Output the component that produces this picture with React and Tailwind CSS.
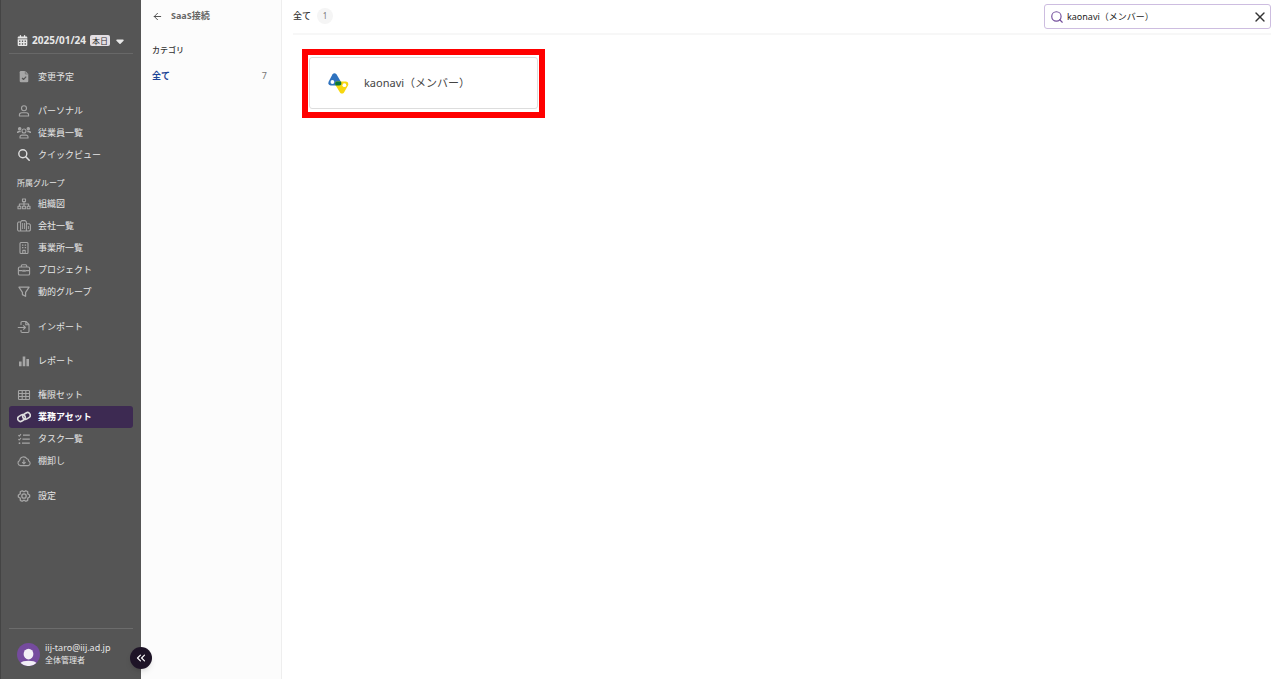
import { useState } from 'react';
import { FaCalendarDays, FaCaretDown } from 'react-icons/fa6';
import { PiGearSixBold } from 'react-icons/pi';
import { LuSearch, LuArrowLeft, LuX, LuChevronsLeft } from 'react-icons/lu';

function Glyph({ className, children }) {
  return (
    <svg
      viewBox="0 0 14 14"
      className={className}
      fill="none"
      stroke="currentColor"
      strokeWidth="1.1"
      strokeLinejoin="round"
      aria-hidden="true"
    >
      {children}
    </svg>
  );
}

const FileCheck = (props) => (
  <Glyph {...props}>
    <path d="M4 1h4.3l3 3v7a1.3 1.3 0 0 1-1.3 1.3H4A1.3 1.3 0 0 1 2.7 11V2.3A1.3 1.3 0 0 1 4 1Z" fill="currentColor" stroke="none" />
    <path d="M8.3 1v3h3" stroke="#6a6a6a" strokeWidth="0.7" />
    <path d="M5 8l1.5 1.5 2.7-2.8" stroke="#555" />
  </Glyph>
);

const Person = (props) => (
  <Glyph {...props}>
    <circle cx="7" cy="4.2" r="2.5" />
    <path d="M2.4 12v-.9c0-1.3 1-2.3 2.3-2.3h4.6c1.3 0 2.3 1 2.3 2.3v.9Z" />
  </Glyph>
);

const People = (props) => (
  <Glyph {...props}>
    <circle cx="2.7" cy="2.8" r="1.2" fill="currentColor" />
    <circle cx="11.3" cy="2.8" r="1.2" fill="currentColor" />
    <circle cx="7" cy="5" r="2" />
    <path d="M.6 7c0-1.1.7-1.6 1.7-1.6h1.4M13.4 7c0-1.1-.7-1.6-1.7-1.6h-1.4" strokeWidth="1.5" />
    <path d="M3 12v-.9c0-1.2.9-2 2-2h4c1.1 0 2 .8 2 2v.9Z" />
  </Glyph>
);

const Magnifier = (props) => (
  <Glyph {...props}>
    <circle cx="5.8" cy="5.8" r="4" strokeWidth="1.4" />
    <path d="M8.8 8.8l3.4 3.4" strokeWidth="1.6" strokeLinecap="round" />
  </Glyph>
);

const OrgChart = (props) => (
  <Glyph {...props}>
    <path d="M5.5 2h3v2.6h-3ZM1 9.2h2.8v2.5H1ZM5.6 9.2h2.8v2.5H5.6ZM10.2 9.2H13v2.5h-2.8Z" />
    <path d="M7 4.6v4.6M2.4 9.2V7h9.2v2.2" />
  </Glyph>
);

const Company = (props) => (
  <Glyph {...props}>
    <path d="M3.6 12V2.8L4.8 1.6h3.4l1.2 1.2V12ZM3.6 3H1.4L.6 4v7l.8 1h2.2M9.4 4.8h3l1 1V11l-1 1h-3" />
    <path d="M5.6 4v6M7.5 4v6M11.4 7v3" strokeWidth="0.9" />
  </Glyph>
);

const Office = (props) => (
  <Glyph {...props}>
    <rect x="3" y="1.5" width="8" height="11" rx="1" />
    <path d="M5 4.1h1.4M7.7 4.1h1.4M5 6.6h1.4M7.7 6.6h1.4" strokeWidth="1.4" />
    <path d="M5.8 12.3V9.4h2.4v2.9" />
  </Glyph>
);

const Briefcase = (props) => (
  <Glyph {...props}>
    <rect x="1.4" y="4" width="11.2" height="8" rx="1.3" />
    <path d="M4.3 4V2.7c0-.6.4-1 1-1h3.4c.6 0 1 .4 1 1V4M1.4 7.6h3.8M8.8 7.6h3.8" />
    <path d="M5.4 7.2h3.2v1.2H5.4Z" fill="currentColor" strokeWidth="0.5" />
  </Glyph>
);

const Funnel = (props) => (
  <Glyph {...props}>
    <path d="M1.9 2.2h10.2L8.6 7.4v3.9L5.4 9.6V7.4Z" strokeWidth="1.2" />
  </Glyph>
);

const Import = (props) => (
  <Glyph {...props}>
    <path d="M4 5V2.7c0-.7.5-1.2 1.2-1.2H9l3 3v6.8c0 .7-.5 1.2-1.2 1.2H5.2c-.7 0-1.2-.5-1.2-1.2V10M8.8 1.7v3h3M.8 7.5h7.4M6.2 5.3l2.2 2.2-2.2 2.2" />
  </Glyph>
);

const Bars = (props) => (
  <Glyph {...props}>
    <path d="M2 7.6h2.6v4.6H2ZM5.7 2.6h2.6v9.6H5.7ZM9.4 5h2.6v7.2H9.4Z" fill="currentColor" stroke="none" />
  </Glyph>
);

const Grid = (props) => (
  <Glyph {...props}>
    <rect x="1.5" y="2.5" width="11" height="9" rx="0.8" />
    <path d="M1.5 5.5h11M1.5 8.5h11M5.2 2.5v9M8.8 2.5v9" />
  </Glyph>
);

const Chain = (props) => (
  <Glyph {...props}>
    <g strokeWidth="1.6" transform="rotate(-32 7 7)">
      <rect x="0.4" y="3.9" width="7.8" height="5.4" rx="2.7" />
      <rect x="5.8" y="4.7" width="7.8" height="5.4" rx="2.7" />
    </g>
  </Glyph>
);

const Tasks = (props) => (
  <Glyph {...props}>
    <path d="M6 3.2h6.8M5.4 7.2h7.4M5 11.2h7.8" strokeWidth="1.2" />
    <path d="M1.4 3.2l.9.9 1.7-2M1.4 7.1l.9.9 1.7-2" />
    <circle cx="2.5" cy="11.2" r="0.9" fill="currentColor" stroke="none" />
  </Glyph>
);

const Cloud = (props) => (
  <Glyph {...props}>
    <path d="M3.4 11.6a2.7 2.7 0 0 1-.7-5.2 3.9 3.9 0 0 1 7.2-1.6 2 2 0 0 1 1.7 2.2 2.4 2.4 0 0 1-.4 4.6Z" />
    <path d="M6.9 5.6v4.2M5.2 8.2l1.7 1.7 1.7-1.7" />
  </Glyph>
);

function KaonaviLogo() {
  return (
    <svg viewBox="0 0 21 21" className="h-[21px] w-[21px] shrink-0" aria-hidden="true">
      <path d="M4.4 1.6Q6.4-.9 8.6 1.6L13.2 9.2Q14 12.4 11 12.6H2.6Q-.4 12 .6 8.8Z" fill="#2f73bf" />
      <path d="M8.6 8.6H18Q21.2 9.4 20 12.4L16 19.4Q14 21.8 12 19.4L7.4 12Q6.4 9.6 8.6 8.6Z" fill="#f7d70f" />
      <path d="M8.6 8.6H12.9L13.2 9.2Q14 12.4 11 12.6H7.8L7.4 12Q6.4 9.6 8.6 8.6Z" fill="#08763c" />
      <circle cx="4.4" cy="9" r="1.9" fill="#fff" />
      <circle cx="16.4" cy="12.2" r="1.9" fill="#fff" />
    </svg>
  );
}

const groups = [
  { items: [{ label: '変更予定', icon: FileCheck }] },
  {
    items: [
      { label: 'パーソナル', icon: Person },
      { label: '従業員一覧', icon: People },
      { label: 'クイックビュー', icon: Magnifier, bright: true },
    ],
  },
  {
    title: '所属グループ',
    items: [
      { label: '組織図', icon: OrgChart },
      { label: '会社一覧', icon: Company },
      { label: '事業所一覧', icon: Office },
      { label: 'プロジェクト', icon: Briefcase },
      { label: '動的グループ', icon: Funnel },
    ],
  },
  { items: [{ label: 'インポート', icon: Import }] },
  { items: [{ label: 'レポート', icon: Bars }] },
  {
    items: [
      { label: '権限セット', icon: Grid },
      { label: '業務アセット', icon: Chain, active: true },
      { label: 'タスク一覧', icon: Tasks },
      { label: '棚卸し', icon: Cloud },
    ],
  },
  { items: [{ label: '設定', icon: PiGearSixBold }] },
];

function NavItem({ label, icon: Icon, active, bright }) {
  return (
    <li>
      <a
        href="#"
        aria-current={active ? 'page' : undefined}
        className={`flex h-[22px] items-center gap-[7px] rounded-[3px] pl-2 text-[9px] ${
          active ? 'bg-[#3d2a52] font-bold text-white' : 'text-[#e6e6e6]'
        }`}
      >
        <Icon className={`h-[14px] w-[14px] shrink-0 ${active || bright ? 'text-[#dedede]' : 'text-[#a6a6a6]'}`} />
        {label}
      </a>
    </li>
  );
}

function Sidebar() {
  return (
    <aside className="relative flex w-[141px] shrink-0 flex-col border-l border-[#444] bg-[#555] pr-2 pl-2">
      <button type="button" className="mt-7 flex h-[26px] items-center border-b border-[#686868] pl-2 text-[#e8e8e8]">
        <FaCalendarDays className="h-[11px] w-[11px] shrink-0" />
        <span className="ml-1 text-[10px] font-bold">2025/01/24</span>
        <span className="ml-1 flex h-[11px] items-center rounded-[2px] bg-[#e4dfe4] px-[2px] text-[8px] text-[#333]">本日</span>
        <FaCaretDown className="ml-1 h-[12px] w-[12px]" />
      </button>
      <nav className="mt-3 flex flex-col gap-3">
        {groups.map((group) => (
          <div key={group.items[0].label} className={group.items.length > 1 ? 'pb-px' : ''}>
            {group.title && <h2 className="h-[14px] pl-2 text-[8px] leading-[8px] text-[#e6e6e6]">{group.title}</h2>}
            <ul>
              {group.items.map((item) => (
                <NavItem key={item.label} {...item} />
              ))}
            </ul>
          </div>
        ))}
      </nav>
      <div className="mt-auto flex h-[51px] items-center gap-[5px] border-t border-[#6c6c6c] pl-2">
        <svg viewBox="0 0 24 24" className="h-[23px] w-[23px] shrink-0" aria-hidden="true">
          <circle cx="12" cy="12" r="12" fill="#754b9e" />
          <ellipse cx="12" cy="11.5" rx="5.1" ry="5.6" fill="#f2eff6" />
          <path d="M3.8 20.8C5.5 17.6 18.5 17.6 20.2 20.8A12 12 0 0 1 3.8 20.8Z" fill="#f2eff6" />
        </svg>
        <div className="text-[#e6e6e6]">
          <p className="text-[9px] leading-[12px]">iij-taro@iij.ad.jp</p>
          <p className="text-[8px] leading-[12px]">全体管理者</p>
        </div>
      </div>
      <button
        type="button"
        aria-label="メニューを閉じる"
        className="absolute -right-[11px] bottom-[10px] flex h-[22px] w-[22px] items-center justify-center rounded-full bg-[#1e1427] text-white shadow-md"
      >
        <LuChevronsLeft className="h-[14px] w-[14px]" />
      </button>
    </aside>
  );
}

export default function App() {
  const [query, setQuery] = useState('kaonavi（メンバー）');
  return (
    <div className="flex min-h-screen bg-white font-['Noto_Sans','Noto_Sans_CJK_JP',sans-serif] text-[#333]">
      <Sidebar />
      <section className="w-[141px] shrink-0 border-r border-[#eee] bg-[#fcfcfc] px-[11px]">
        <div className="flex h-8 items-center gap-2 text-[#666]">
          <button type="button" aria-label="戻る">
            <LuArrowLeft className="h-[11px] w-[11px] text-[#444]" />
          </button>
          <h1 className="text-[9px] font-bold">SaaS接続</h1>
        </div>
        <h2 className="mt-3 text-[8px] leading-[12px] font-medium">カテゴリ</h2>
        <a href="#" className="mt-3 flex h-4 items-center justify-between pr-[3px] text-[9px]">
          <span className="font-bold text-[#1d4596]">全て</span>
          <span className="text-[#777]">7</span>
        </a>
      </section>
      <main className="min-w-0 flex-1 pr-[9px] pl-[11px]">
        <header className="flex h-[35px] items-start justify-between border-b-2 border-[#f7f7f7]">
          <div className="flex h-8 items-center gap-[6px]">
            <h2 className="text-[9px] font-medium">全て</h2>
            <span className="flex h-4 w-4 items-center justify-center rounded-full bg-[#f5f5f5] text-[8px] text-[#777]">1</span>
          </div>
          <div className="mt-1 flex h-[25px] w-[227px] items-center rounded-[3px] border border-[#cdbde0] pr-[2px] pl-[5px]">
            <LuSearch className="h-[14px] w-[14px] shrink-0 text-[#75509d]" />
            <input
              type="text"
              aria-label="検索"
              value={query}
              onChange={(e) => setQuery(e.target.value)}
              className="ml-[3px] min-w-0 flex-1 bg-transparent text-[9px] text-[#222] outline-none"
            />
            <button type="button" aria-label="クリア" onClick={() => setQuery('')}>
              <LuX className="h-4 w-4 text-[#333]" />
            </button>
          </div>
        </header>
        <div className="mt-[14px] ml-[9px] w-[243px] border-[6px] border-[#f00] px-px pt-[2px] pb-[3px]">
          <a href="#" className="flex h-[52px] items-center gap-[15px] rounded-[3px] border border-[#ddd] pl-[18px] text-[11px] text-[#444]">
            <KaonaviLogo />
            kaonavi（メンバー）
          </a>
        </div>
      </main>
    </div>
  );
}
